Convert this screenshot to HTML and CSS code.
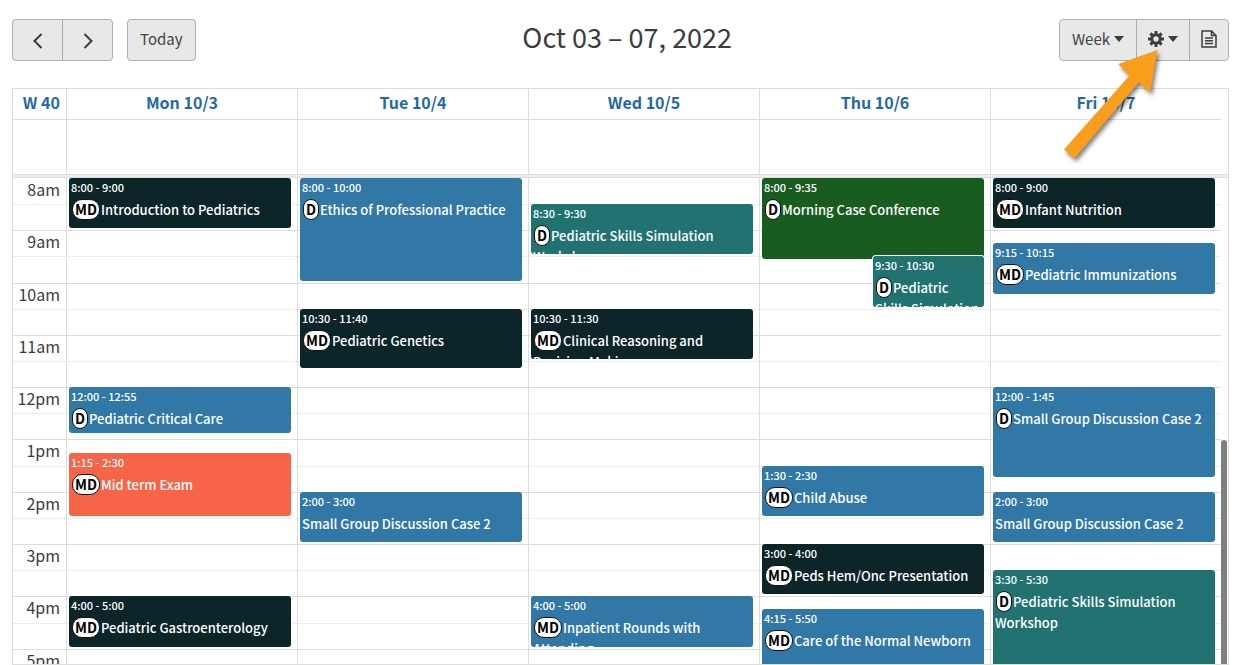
FILE: index.html
```html
<!DOCTYPE html>
<html lang="en">
<head>
  <meta charset="UTF-8">
  <meta name="viewport" content="width=device-width, initial-scale=1.0">
  <title>Calendar</title>
  <link rel="stylesheet" href="styles.css">
</head>
<body>
  <header class="toolbar">
    <div class="toolbar-group">
      <div class="button-group">
        <button type="button" class="btn btn-nav" aria-label="Previous week">
          <svg width="12" height="18" viewBox="0 0 12 18"><path d="M9.500 2 L2.500 9 L9.500 16"/></svg>
        </button>
        <button type="button" class="btn btn-nav" aria-label="Next week">
          <svg width="12" height="18" viewBox="0 0 12 18"><path d="M2.500 2 L9.500 9 L2.500 16"/></svg>
        </button>
      </div>
      <button type="button" class="btn">Today</button>
    </div>

    <h1>Oct 03 – 07, 2022</h1>

    <div class="button-group">
      <button type="button" class="btn">Week <span class="caret"></span></button>
      <button type="button" class="btn btn-icon" aria-label="Settings">
        <svg class="gear" width="16" height="16" viewBox="0 0 16 16">
          <circle cx="8" cy="8" r="4.200"/>
          <path d="M8 0v3.500M8 12.500V16M0 8h3.500M12.500 8H16M2.350 2.350l2.500 2.500M11.150 11.150l2.500 2.500M2.350 13.650l2.500-2.500M11.150 4.850l2.500-2.500"/>
        </svg>
        <span class="caret"></span>
      </button>
      <button type="button" class="btn btn-icon" aria-label="Agenda">
        <svg class="page" width="16" height="18" viewBox="0 0 16 18">
          <path d="M1 1h9.500L15 5.500V17H1zM10.500 1v4.500H15M4 8h8M4 10.750h8M4 13.500h8"/>
        </svg>
      </button>
    </div>

    <svg class="pointer" width="120" height="130" viewBox="0 0 120 130" aria-hidden="true">
      <path d="M103.500 5 L64.300 19 L75.500 30.500 L10 104.500 L20.500 113.500 L84.700 37.300 L96.300 47.300 Z"/>
    </svg>
  </header>

  <main class="calendar">
    <div class="row day-header">
      <div><a href="#week">W 40</a></div>
      <div><a href="#mon">Mon 10/3</a></div>
      <div><a href="#tue">Tue 10/4</a></div>
      <div><a href="#wed">Wed 10/5</a></div>
      <div><a href="#thu">Thu 10/6</a></div>
      <div><a href="#fri">Fri 10/7</a></div>
    </div>
    <div class="row all-day">
      <div></div><div></div><div></div><div></div><div></div><div></div>
    </div>
    <div class="divider"></div>

    <div class="scroller">
      <div class="time-grid">
        <div class="slots">
          <div class="slot">8am</div><div class="slot half"></div>
          <div class="slot">9am</div><div class="slot half"></div>
          <div class="slot">10am</div><div class="slot half"></div>
          <div class="slot">11am</div><div class="slot half"></div>
          <div class="slot">12pm</div><div class="slot half"></div>
          <div class="slot">1pm</div><div class="slot half"></div>
          <div class="slot">2pm</div><div class="slot half"></div>
          <div class="slot">3pm</div><div class="slot half"></div>
          <div class="slot">4pm</div><div class="slot half"></div>
          <div class="slot">5pm</div><div class="slot half"></div>
        </div>

        <!-- one grid row is five minutes, row 1 starts at 8am -->
        <div class="days">
          <div class="day">
            <div class="event dark" style="grid-row: 1 / 13">
              <div class="time">8:00 - 9:00</div>
              <div class="name"><span class="badge">MD</span>Introduction to Pediatrics</div>
            </div>
            <div class="event blue" style="grid-row: 49 / 60">
              <div class="time">12:00 - 12:55</div>
              <div class="name"><span class="badge">D</span>Pediatric Critical Care</div>
            </div>
            <div class="event red" style="grid-row: 64 / 79">
              <div class="time">1:15 - 2:30</div>
              <div class="name"><span class="badge">MD</span>Mid term Exam</div>
            </div>
            <div class="event dark" style="grid-row: 97 / 109">
              <div class="time">4:00 - 5:00</div>
              <div class="name"><span class="badge">MD</span>Pediatric Gastroenterology</div>
            </div>
          </div>

          <div class="day">
            <div class="event blue" style="grid-row: 1 / 25">
              <div class="time">8:00 - 10:00</div>
              <div class="name"><span class="badge">D</span>Ethics of Professional Practice</div>
            </div>
            <div class="event dark" style="grid-row: 31 / 45">
              <div class="time">10:30 - 11:40</div>
              <div class="name"><span class="badge">MD</span>Pediatric Genetics</div>
            </div>
            <div class="event blue" style="grid-row: 73 / 85">
              <div class="time">2:00 - 3:00</div>
              <div class="name">Small Group Discussion Case 2</div>
            </div>
          </div>

          <div class="day">
            <div class="event teal" style="grid-row: 7 / 19">
              <div class="time">8:30 - 9:30</div>
              <div class="name"><span class="badge">D</span>Pediatric Skills Simulation Workshop</div>
            </div>
            <div class="event dark" style="grid-row: 31 / 43">
              <div class="time">10:30 - 11:30</div>
              <div class="name"><span class="badge">MD</span>Clinical Reasoning and Decision Making</div>
            </div>
            <div class="event blue" style="grid-row: 97 / 109">
              <div class="time">4:00 - 5:00</div>
              <div class="name"><span class="badge">MD</span>Inpatient Rounds with<br>Attending</div>
            </div>
          </div>

          <div class="day">
            <div class="event green" style="grid-row: 1 / 20">
              <div class="time">8:00 - 9:35</div>
              <div class="name"><span class="badge">D</span>Morning Case Conference</div>
            </div>
            <div class="event teal overlap" style="grid-row: 19 / 31">
              <div class="time">9:30 - 10:30</div>
              <div class="name"><span class="badge">D</span>Pediatric Skills Simulation Workshop</div>
            </div>
            <div class="event blue" style="grid-row: 67 / 79">
              <div class="time">1:30 - 2:30</div>
              <div class="name"><span class="badge">MD</span>Child Abuse</div>
            </div>
            <div class="event dark" style="grid-row: 85 / 97">
              <div class="time">3:00 - 4:00</div>
              <div class="name"><span class="badge">MD</span>Peds Hem/Onc Presentation</div>
            </div>
            <div class="event blue" style="grid-row: 100 / 119">
              <div class="time">4:15 - 5:50</div>
              <div class="name"><span class="badge">MD</span>Care of the Normal Newborn</div>
            </div>
          </div>

          <div class="day">
            <div class="event dark" style="grid-row: 1 / 13">
              <div class="time">8:00 - 9:00</div>
              <div class="name"><span class="badge">MD</span>Infant Nutrition</div>
            </div>
            <div class="event blue" style="grid-row: 16 / 28">
              <div class="time">9:15 - 10:15</div>
              <div class="name"><span class="badge">MD</span>Pediatric Immunizations</div>
            </div>
            <div class="event blue" style="grid-row: 49 / 70">
              <div class="time">12:00 - 1:45</div>
              <div class="name"><span class="badge">D</span>Small Group Discussion Case 2</div>
            </div>
            <div class="event blue" style="grid-row: 73 / 85">
              <div class="time">2:00 - 3:00</div>
              <div class="name">Small Group Discussion Case 2</div>
            </div>
            <div class="event teal" style="grid-row: 91 / 115">
              <div class="time">3:30 - 5:30</div>
              <div class="name"><span class="badge">D</span>Pediatric Skills Simulation Workshop</div>
            </div>
          </div>
        </div>
      </div>
      <div class="scrollbar"><div class="thumb"></div></div>
    </div>
  </main>
</body>
</html>
```
FILE: styles.css
```css
* {
  box-sizing: border-box;
}

body {
  margin: 0;
  padding: 19px 5px 0 12px;
  height: 100vh;
  display: flex;
  flex-direction: column;
  overflow: hidden;
  background-color: #fff;
  color: #3c3c3c;
  font-family: "Noto Sans CJK SC", sans-serif;
  font-size: 16px;
}

/* Toolbar */
.toolbar {
  position: relative;
  display: flex;
  justify-content: space-between;
  align-items: flex-start;
  margin-bottom: 27px;
}

.toolbar h1 {
  margin: 0;
  font-size: 27px;
  font-weight: 400;
  line-height: 36px;
}

.toolbar-group {
  display: flex;
  gap: 14px;
}

.button-group {
  display: flex;
}

.btn {
  display: flex;
  align-items: center;
  gap: 4px;
  height: 42px;
  padding: 0 12px 3px;
  border: 1px solid #adadad;
  border-radius: 4px;
  background-color: #e8e8e8;
  color: #444;
  font-family: inherit;
  font-size: 15px;
  line-height: 24px;
}

.btn-nav {
  width: 51px;
  padding: 2px 0 0;
  justify-content: center;
}

.btn-icon {
  padding: 0 11px 3px;
}

.button-group .btn:not(:first-child) {
  margin-left: -1px;
  border-top-left-radius: 0;
  border-bottom-left-radius: 0;
}

.button-group .btn:not(:last-child) {
  border-top-right-radius: 0;
  border-bottom-right-radius: 0;
}

.btn svg {
  fill: none;
  stroke: #3c3c3c;
  stroke-width: 2;
}

.btn .gear {
  stroke-width: 3;
}

.btn .page {
  stroke-width: 1.5;
}

.caret {
  border-top: 6px solid #3c3c3c;
  border-left: 5px solid transparent;
  border-right: 5px solid transparent;
}

.pointer {
  position: absolute;
  top: 26px;
  right: 55px;
  z-index: 2;
  fill: #f99d1c;
  filter: drop-shadow(2px 3px 2px rgba(0, 0, 0, 0.5));
  pointer-events: none;
}

/* Calendar */
.calendar {
  flex: 1;
  min-height: 0;
  display: flex;
  flex-direction: column;
  border: 1px solid #ddd;
}

.row {
  display: grid;
  grid-template-columns: 53px repeat(5, 1fr);
  margin-right: 7px;
}

.row > div + div {
  border-left: 1px solid #ddd;
}

.day-header {
  height: 31px;
  border-bottom: 1px solid #ddd;
  text-align: center;
  font-size: 16px;
  font-weight: 700;
  line-height: 26px;
}

.day-header > div:first-child {
  padding-right: 6px;
  text-align: right;
}

.day-header a {
  color: #1f69a8;
  text-decoration: none;
}

.all-day {
  height: 54px;
}

.divider {
  height: 4px;
  border: 1px solid #ddd;
  border-width: 1px 0;
  background-color: #eee;
}

.scroller {
  flex: 1;
  min-height: 0;
  display: flex;
  overflow: hidden;
}

.time-grid {
  flex: 1;
  display: grid;
  grid-template-rows: minmax(0, 1fr);
  height: 523px;
}

.slots,
.days {
  grid-area: 1 / 1;
}

.slots {
  display: grid;
  grid-template-rows: repeat(20, minmax(0, 1fr));
}

.slot {
  border-top: 1px solid #ddd;
  width: 100%;
  padding-right: calc(100% - 47px);
  text-align: right;
  line-height: 21px;
}

.slot:first-child {
  border-top-color: transparent;
}

.slot.half {
  border-top-style: dotted;
}

.days {
  display: grid;
  grid-template-columns: repeat(5, minmax(0, 1fr));
  grid-template-rows: minmax(0, 1fr);
  margin-left: 53px;
}

.day {
  display: grid;
  grid-template-rows: repeat(120, minmax(0, 1fr));
  grid-template-columns: minmax(0, 1fr);
  padding: 0 6px 0 2px;
  border-left: 1px solid #ddd;
}

.event {
  grid-column: 1;
  min-height: 0;
  margin-bottom: 2px;
  padding: 0 2px;
  border-radius: 3px;
  overflow: hidden;
  color: #fff;
  font-size: 13px;
  font-weight: 500;
  line-height: 21px;
}

.event .time {
  font-size: 11px;
  line-height: 19px;
}

.event .name {
  padding-top: 2px;
}

.overlap {
  width: 50%;
  justify-self: end;
  box-shadow: 0 0 0 1px #fff;
}

.badge {
  display: inline-block;
  height: 21px;
  margin: 0 1px;
  padding: 0 2px;
  border: 1px solid #111;
  border-radius: 10px;
  background-color: #fff;
  color: #000;
  font-size: 14px;
  font-weight: 700;
  line-height: 19px;
  vertical-align: top;
}

.dark {
  background-color: #0c2529;
}

.blue {
  background-color: #3278a7;
}

.teal {
  background-color: #227272;
}

.green {
  background-color: #195c1f;
}

.red {
  background-color: #f76448;
}

.scrollbar {
  display: flex;
  flex-direction: column;
  justify-content: flex-end;
  width: 7px;
}

.thumb {
  height: 46%;
  width: 6px;
  border-radius: 3px 3px 0 0;
  background-color: #7f7f7f;
}
```
